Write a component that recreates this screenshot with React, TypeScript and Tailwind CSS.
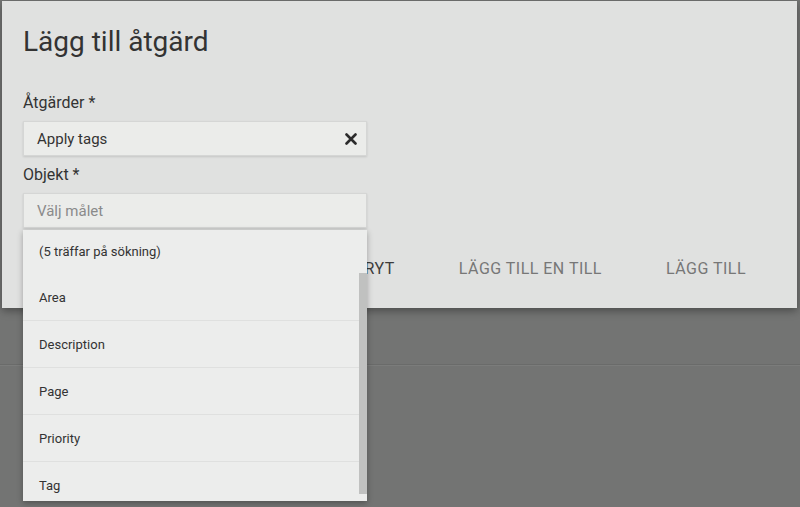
import { useState } from 'react';

const targets = ['Area', 'Description', 'Page', 'Priority', 'Tag'];

function ClearIcon() {
  return (
    <svg width="12" height="12" viewBox="0 0 12 12" className="shrink-0">
      <path d="M1.5 1.5 L10.5 10.5 M10.5 1.5 L1.5 10.5" stroke="#2b2b2b" strokeWidth="2.6" strokeLinecap="round" />
    </svg>
  );
}

export default function App() {
  const [action] = useState('Apply tags');

  return (
    <div
      className="relative w-[800px] h-[507px] overflow-hidden bg-[#737473] text-[#333]"
      style={{ fontFamily: 'Roboto, "Noto Sans", sans-serif' }}
    >
      {/* page behind the overlay */}
      <div className="h-[364px]" />
      <div className="h-[1px] bg-[#6a6b6a]" />
      <div className="h-[1px] bg-[#7b7c7b]" />

      {/* dialog */}
      <div className="absolute left-[2px] top-[1px] w-[795px] h-[307px] bg-[#e0e1e0] shadow-[0_3px_8px_rgba(0,0,0,0.35)] pl-[21px] pt-[25px]">
        <h1 className="text-[28px] leading-[32px] font-normal text-[#333]">Lägg till åtgärd</h1>

        <label className="block mt-[35px] text-[16px] leading-[20px]">Åtgärder *</label>
        <div className="mt-[8px] w-[344px] h-[35px] bg-[#ebecea] border border-[#d5d6d5] shadow-[0_1px_2px_rgba(0,0,0,0.12)] flex items-center justify-between pl-[13px] pr-[9px]">
          <span className="text-[15px] leading-[20px] pt-[1px]">{action}</span>
          <ClearIcon />
        </div>

        <label className="block mt-[9px] text-[16px] leading-[20px]">Objekt *</label>
        <div className="relative mt-[8px] w-[344px]">
          <div className="h-[35px] bg-[#ebecea] border border-[#d5d6d5] shadow-[0_1px_2px_rgba(0,0,0,0.12)] flex items-center pl-[13px]">
            <span className="text-[15px] leading-[20px] pt-[1px] text-[#8a8a8a]">Välj målet</span>
          </div>

          {/* dropdown */}
          <div className="absolute left-0 top-[37px] z-10 w-[344px] h-[271px] overflow-hidden bg-[#ecedec] shadow-[0_2px_6px_rgba(0,0,0,0.3)]">
            <div className="w-[336px]">
              <div className="h-[44px] flex items-center pl-[16px] text-[13px] font-normal text-[#333]">
                (5 träffar på sökning)
              </div>
              {targets.map(t => (
                <div key={t} className="h-[47px] flex items-center pl-[16px] pt-[1px] text-[13px] border-b border-[#dfe0df]">
                  {t}
                </div>
              ))}
            </div>
            <div className="absolute right-0 top-[43px] w-[8px] h-[221px] bg-[#c0c1c0]" />
          </div>
        </div>

        <div className="mt-[23px] flex justify-end gap-[64px] pr-[51px] text-[16px] leading-[36px] font-normal tracking-[0.03em]">
          <button className="uppercase text-[#3c3c3c]">Avbryt</button>
          <button className="uppercase text-[#777]">Lägg till en till</button>
          <button className="uppercase text-[#777]">Lägg till</button>
        </div>
      </div>
    </div>
  );
}
